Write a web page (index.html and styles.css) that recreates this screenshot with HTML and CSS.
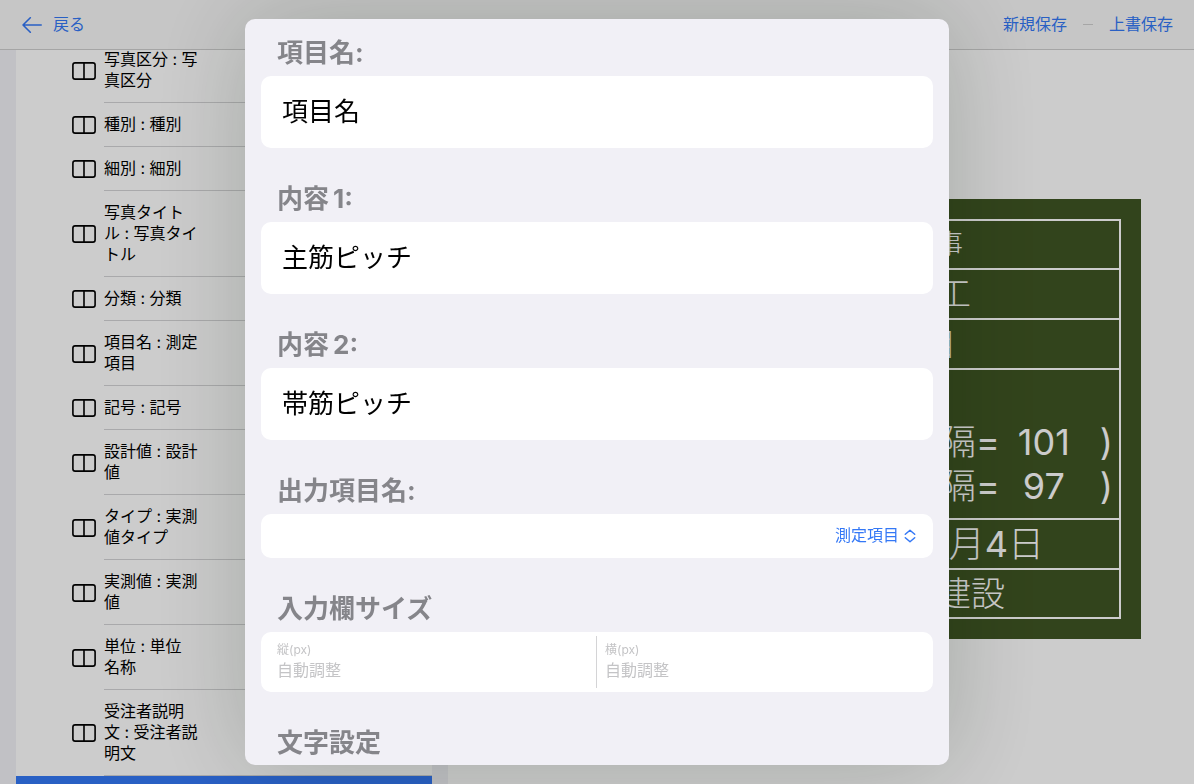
FILE: index.html
```
<!DOCTYPE html>
<html lang="ja">
<head>
    <meta charset="UTF-8">
    <meta name="viewport" content="width=device-width, initial-scale=1.0">
    <title>項目名</title>
    <link rel="stylesheet" href="styles.css">
</head>
<body>
    <!-- Shared icons -->
    <svg class="icon-defs" aria-hidden="true">
        <symbol id="icon-columns" viewBox="0 0 24 18">
            <rect x="0.9" y="0.9" width="22.2" height="16.2" rx="2.2" fill="none" stroke="currentColor" stroke-width="1.6"/>
            <path d="M12 1v16" stroke="currentColor" stroke-width="1.6"/>
        </symbol>
    </svg>

    <header class="navbar">
        <a href="#" class="back">
            <svg width="20" height="16" viewBox="0 0 20 16" fill="none" stroke="currentColor" stroke-width="1.6" stroke-linecap="round" stroke-linejoin="round">
                <path d="M19.2 8H1M8.3 0.8L1 8l7.3 7.2"/>
            </svg>
            <span>戻る</span>
        </a>
        <div class="nav-actions">
            <button type="button">新規保存</button>
            <span class="dash"></span>
            <button type="button">上書保存</button>
        </div>
    </header>

    <div class="content">
        <aside class="sidebar">
            <ul class="field-list">
                <li><svg class="icon"><use href="#icon-columns"/></svg><div class="field"><span>写真区分 : 写真区分</span></div></li>
                <li><svg class="icon"><use href="#icon-columns"/></svg><div class="field"><span>種別 : 種別</span></div></li>
                <li><svg class="icon"><use href="#icon-columns"/></svg><div class="field"><span>細別 : 細別</span></div></li>
                <li><svg class="icon"><use href="#icon-columns"/></svg><div class="field"><span>写真タイトル : 写真タイトル</span></div></li>
                <li><svg class="icon"><use href="#icon-columns"/></svg><div class="field"><span>分類 : 分類</span></div></li>
                <li><svg class="icon"><use href="#icon-columns"/></svg><div class="field"><span>項目名 : 測定項目</span></div></li>
                <li><svg class="icon"><use href="#icon-columns"/></svg><div class="field"><span>記号 : 記号</span></div></li>
                <li><svg class="icon"><use href="#icon-columns"/></svg><div class="field"><span>設計値 : 設計値</span></div></li>
                <li><svg class="icon"><use href="#icon-columns"/></svg><div class="field"><span>タイプ : 実測値タイプ</span></div></li>
                <li><svg class="icon"><use href="#icon-columns"/></svg><div class="field"><span>実測値 : 実測値</span></div></li>
                <li><svg class="icon"><use href="#icon-columns"/></svg><div class="field"><span>単位 : 単位<br>名称</span></div></li>
                <li><svg class="icon"><use href="#icon-columns"/></svg><div class="field"><span>受注者説明文 : 受注者説明文</span></div></li>
                <li class="selected"></li>
            </ul>
        </aside>

        <main class="preview">
            <div class="board">
                <div class="board-grid">
                    <div class="board-row small">鉄筋組立工事</div>
                    <div class="board-row medium">基礎鉄筋工</div>
                    <div class="board-row">配筋の項目</div>
                    <div class="board-row measures">
                        <div class="measure">間隔<b>=</b><b class="num">101</b><b>)</b></div>
                        <div class="measure">間隔<b>=</b><b class="num">97</b><b>)</b></div>
                    </div>
                    <div class="board-row large"><span><b>2024</b>年<b>6</b>月<b>4</b>日</span></div>
                    <div class="board-row medium">株式会社建設</div>
                </div>
            </div>
        </main>
    </div>

    <div class="overlay">
        <form class="sheet" role="dialog" aria-label="項目名">
            <label class="section-title" for="itemName">項目名:</label>
            <div class="card">
                <input type="text" class="text-input" id="itemName" value="項目名">
            </div>

            <label class="section-title" for="content1">内容&thinsp;1:</label>
            <div class="card">
                <input type="text" class="text-input" id="content1" value="主筋ピッチ">
            </div>

            <label class="section-title" for="content2">内容&thinsp;2:</label>
            <div class="card">
                <input type="text" class="text-input" id="content2" value="帯筋ピッチ">
            </div>

            <label class="section-title" for="outputName">出力項目名:</label>
            <div class="card picker">
                <select id="outputName">
                    <option>測定項目</option>
                </select>
                <svg width="12" height="14" viewBox="0 0 12 14" fill="none" stroke="currentColor" stroke-width="1.5" stroke-linecap="round" stroke-linejoin="round">
                    <path d="M1.3 5.2L6 1.2l4.7 4M1.3 8.8L6 12.8l4.7-4"/>
                </svg>
            </div>

            <h2 class="section-title">入力欄サイズ</h2>
            <div class="card size-card">
                <div class="size-field">
                    <label for="sizeHeight">縦(px)</label>
                    <input type="text" id="sizeHeight" placeholder="自動調整">
                </div>
                <div class="size-field">
                    <label for="sizeWidth">横(px)</label>
                    <input type="text" id="sizeWidth" placeholder="自動調整">
                </div>
            </div>

            <h2 class="section-title">文字設定</h2>
        </form>
    </div>
</body>
</html>
```
FILE: styles.css
```
* {
    margin: 0;
    padding: 0;
    box-sizing: border-box;
}

body {
    height: 100vh;
    display: flex;
    flex-direction: column;
    overflow: hidden;
    background-color: #ffffff;
    color: #000000;
    font-family: Inter, 'Noto Sans CJK JP', sans-serif;
    font-size: 16px;
}

button,
input,
select {
    border: none;
    outline: none;
    background: none;
    font: inherit;
    color: inherit;
}

.icon-defs {
    position: absolute;
    width: 0;
    height: 0;
}

/* Navigation bar */
.navbar {
    flex: none;
    height: 49px;
    padding: 0 21px 3px 22px;
    display: flex;
    justify-content: space-between;
    align-items: center;
    background-color: #f8f8f8;
    box-shadow: 0 1px #cfcfcf;
    color: #3478f6;
    z-index: 1;
}

.back {
    display: flex;
    align-items: center;
    gap: 11px;
    color: inherit;
    text-decoration: none;
}

.back svg {
    margin-top: 3px;
}

.nav-actions {
    display: flex;
    align-items: center;
    gap: 16px;
}

.dash {
    width: 10px;
    height: 1px;
    margin-top: 2px;
    background-color: #d0d0d0;
}

.content {
    flex: 1;
    min-height: 0;
    display: flex;
}

/* Field list */
.sidebar {
    flex: 0 0 448px;
    padding: 0 16px;
    background-color: #f2f2f7;
    overflow: hidden;
}

.field-list {
    margin-top: -11px;
    list-style: none;
    background-color: #ffffff;
}

.field-list li {
    display: flex;
    align-items: center;
    gap: 8px;
    padding-left: 56px;
}

.icon {
    flex: none;
    width: 24px;
    height: 18px;
}

.field {
    flex: 1;
    padding: 11px 0;
    border-bottom: 1px solid #d4d4d6;
    line-height: 21px;
}

.field span {
    display: block;
    width: 95px;
}

.field-list .selected {
    height: 44px;
    background-color: #3478f6;
}

/* Blackboard preview */
.preview {
    flex: 1;
    padding: 5px 53px 0;
    display: flex;
    align-items: center;
}

.board {
    flex: 1;
    padding: 20px;
    background-color: #3f5523;
    color: #ffffff;
}

.board-grid {
    display: grid;
    grid-template-rows: 47px 48px 48px 148px 48px 47px;
    gap: 2px;
    padding: 2px;
    background-color: #ffffff;
}

.board-row {
    display: flex;
    align-items: center;
    padding-left: 278px;
    background-color: #3f5523;
    font-size: 31px;
    font-weight: 300;
    line-height: 44px;
    white-space: nowrap;
}

.board-row b {
    font-weight: 400;
}

.board-row.small {
    font-size: 27px;
}

.board-row.medium {
    font-size: 34px;
}

.board-row.large {
    font-size: 36px;
}

.board-row.measures {
    flex-direction: column;
    justify-content: flex-end;
    align-items: flex-end;
    padding: 0 6px 10px 0;
    font-size: 36px;
}

.measure {
    display: flex;
}

.measure .num {
    width: 100px;
    padding-right: 12px;
    text-align: center;
}

/* Modal sheet */
.overlay {
    position: fixed;
    inset: 0;
    z-index: 2;
    padding: 19px 16px;
    display: flex;
    justify-content: center;
    background-color: rgba(0, 0, 0, 0.2);
}

.sheet {
    width: 100%;
    max-width: 704px;
    padding: 0 16px;
    border-radius: 10px;
    background-color: #f1f0f6;
    box-shadow: 0 0 100px rgba(0, 24, 0, 0.2);
    overflow: hidden;
}

.section-title {
    display: block;
    padding: 35px 16px 7px;
    color: #85858a;
    font-size: 26px;
    font-weight: 700;
    line-height: 32px;
}

.section-title:first-child {
    padding-top: 18px;
}

.card {
    border-radius: 10px;
    background-color: #ffffff;
}

.text-input {
    display: block;
    width: 100%;
    height: 72px;
    padding: 0 21px 5px;
    font-size: 26px;
}

.picker {
    height: 44px;
    padding: 0 17px;
    display: flex;
    justify-content: flex-end;
    align-items: center;
    gap: 4px;
    color: #3478f6;
}

.picker select {
    padding-bottom: 2px;
    appearance: none;
    cursor: pointer;
}

.size-card {
    height: 60px;
    padding: 4px 0;
    display: grid;
    grid-template-columns: 1fr 1fr;
}

.size-field {
    padding: 6px 0 0 8px;
    display: flex;
    flex-direction: column;
    color: #c4c4c6;
}

.size-field:first-child {
    padding-left: 16px;
    border-right: 1px solid #d4d4d6;
}

.size-field label {
    font-size: 12px;
    line-height: 16px;
}

.size-field input {
    height: 24px;
}

.size-field input::placeholder {
    color: #c4c4c6;
    opacity: 1;
}
```
